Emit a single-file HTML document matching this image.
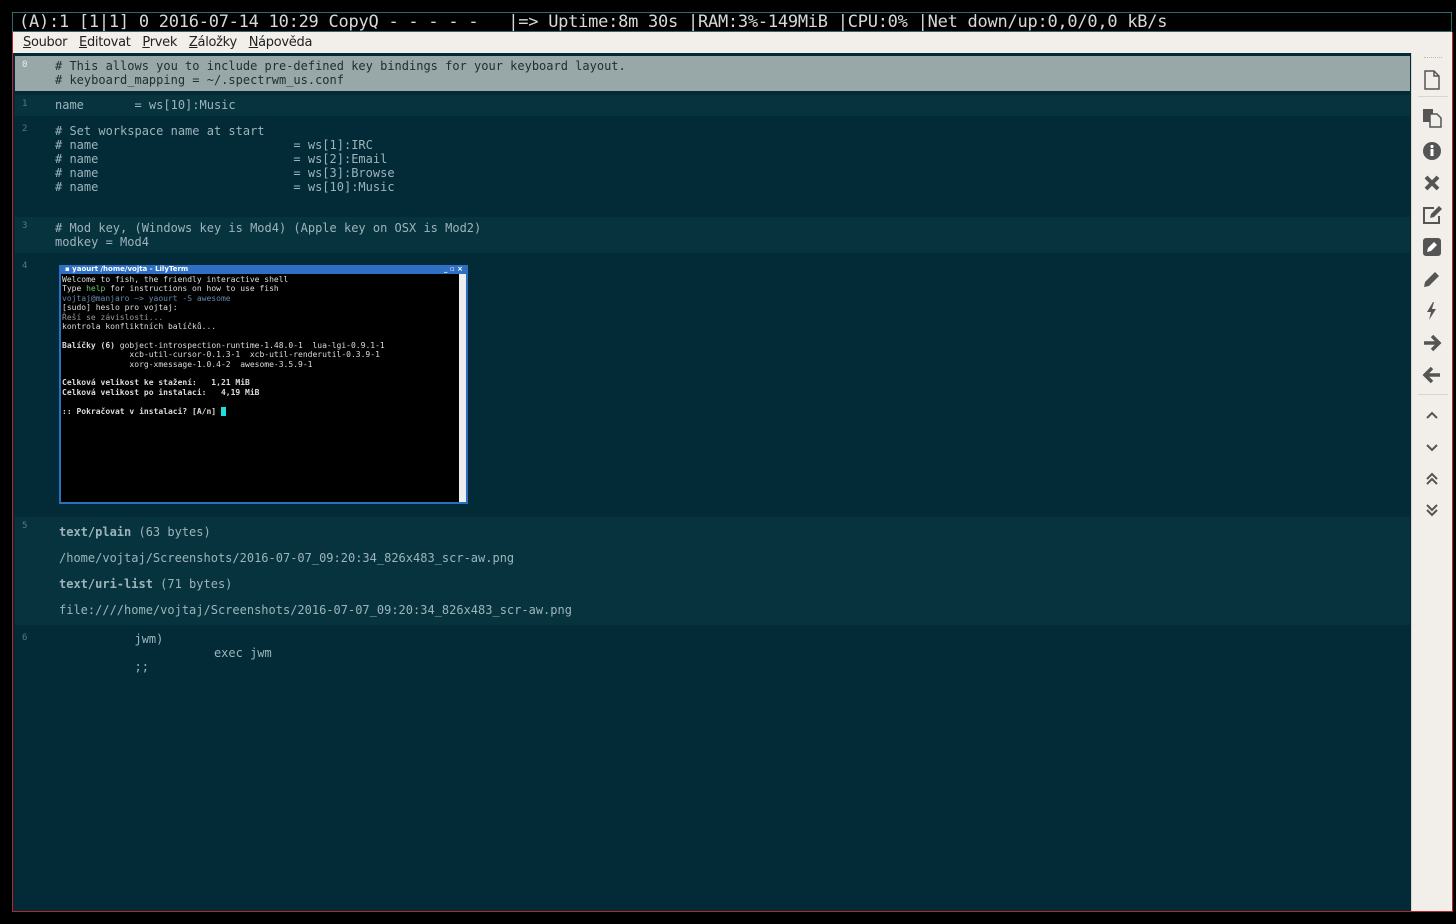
<!DOCTYPE html>
<html><head><meta charset="utf-8"><style>
*{margin:0;padding:0;box-sizing:border-box}
body{width:1456px;height:924px;background:#000;position:relative;overflow:hidden;font-family:"DejaVu Sans Mono","Liberation Mono",monospace}
#bar{position:absolute;left:12px;top:12px;width:1440px;height:20px;background:#000;border:1px solid #2e6a6a;color:#d8d8d8;font:17px/18px "DejaVu Sans Mono",monospace;padding-left:6px;white-space:pre;letter-spacing:-0.25px}
#win{position:absolute;left:12px;top:32px;width:1441px;height:880px;border:1px solid #b8252a;border-top:none;background:#022a37}
#menu{position:absolute;left:0;top:0;width:1439px;height:21px;background:#f2efea;font:13px/21px "DejaVu Sans","Liberation Sans",sans-serif;color:#222;padding-left:10px;letter-spacing:-0.3px}
#menu span{margin-right:8px}
#menu u{text-decoration:underline}
#list{position:absolute;left:2px;top:23px;width:1395px;height:856px;background:#022a37}
.row{position:absolute;left:0;width:1395px;color:#9db4bb;font-size:12px;line-height:14px;white-space:pre}
.alt{background:#07333f}
.num{position:absolute;left:7px;top:2px;font-size:9px;color:#5a7880}
.txt{position:absolute;left:40px}
#tb{position:absolute;left:1398px;top:21px;width:41px;height:858px;background:#f2efea;border-left:1px solid #d8d4ce}
.ic{position:absolute;left:10px;width:20px;height:20px}
.sep{position:absolute;left:6px;width:30px;height:1px;background:#d8d4ce}
</style></head><body>
<div id="bar">(A):1 [1|1] 0 2016-07-14 10:29 CopyQ - - - - -   |=> Uptime:8m 30s |RAM:3%-149MiB |CPU:0% |Net down/up:0,0/0,0 kB/s</div>
<div id="win">
<div id="menu"><span><u>S</u>oubor</span> <span><u>E</u>ditovat</span> <span><u>P</u>rvek</span> <span><u>Z</u>áložky</span> <span><u>N</u>ápověda</span></div>
<div id="list">
<div class="row" style="top:1px;height:35px;background:#98a8a8;color:#1e2e30"><span class="num" style="color:#e8eeee">0</span><div class="txt" style="top:3px"># This allows you to include pre-defined key bindings for your keyboard layout.
# keyboard_mapping = ~/.spectrwm_us.conf</div></div>
<div class="row alt" style="top:40px;height:21px"><span class="num">1</span><div class="txt" style="top:3px">name       = ws[10]:Music</div></div>
<div class="row" style="top:65px;height:93px"><span class="num">2</span><div class="txt" style="top:4px"># Set workspace name at start
# name                           = ws[1]:IRC
# name                           = ws[2]:Email
# name                           = ws[3]:Browse
# name                           = ws[10]:Music</div></div>
<div class="row alt" style="top:162px;height:36px"><span class="num">3</span><div class="txt" style="top:4px"># Mod key, (Windows key is Mod4) (Apple key on OSX is Mod2)
modkey = Mod4</div></div>
<div class="row" style="top:202px;height:256px"><span class="num">4</span><div style="position:absolute;left:44px;top:8px;width:409px;height:239px;background:#000;border:2px solid #2a6fc0;border-top:none;white-space:normal"><div style="height:9px;background:#2f6fc4;color:#fff;font:bold 7px/9px 'DejaVu Sans',sans-serif;padding-left:4px;white-space:nowrap">▪ yaourt  /home/vojta - LilyTerm<span style="float:right;margin-right:3px">_ ▫ ×</span></div><div style="position:absolute;right:0;top:9px;width:7px;bottom:0;background:#eee"></div><div style="position:absolute;left:1px;top:10px;color:#ddd;font:8px/9.4px 'DejaVu Sans Mono',monospace;white-space:pre">Welcome to fish, the friendly interactive shell
Type <span style="color:#6c6">help</span> for instructions on how to use fish
<span style="color:#68a">vojtaj@manjaro ~&gt; yaourt -S awesome</span>
[sudo] heslo pro vojtaj:
<span style="color:#999">Řeší se závislosti...</span>
kontrola konfliktních balíčků...

<b>Balíčky (6)</b> gobject-introspection-runtime-1.48.0-1  lua-lgi-0.9.1-1
              xcb-util-cursor-0.1.3-1  xcb-util-renderutil-0.3.9-1
              xorg-xmessage-1.0.4-2  awesome-3.5.9-1

<b>Celková velikost ke stažení:   1,21 MiB
Celková velikost po instalaci:   4,19 MiB

:: Pokračovat v instalaci? [A/n]</b> <span style="background:#2dd;color:#2dd">_</span></div></div></div>
<div class="row alt" style="top:462px;height:108px"><span class="num">5</span><div class="txt" style="left:44px;top:2px;line-height:26px"><b>text/plain</b> (63 bytes)
/home/vojtaj/Screenshots/2016-07-07_09:20:34_826x483_scr-aw.png
<b>text/uri-list</b> (71 bytes)
file:////home/vojtaj/Screenshots/2016-07-07_09:20:34_826x483_scr-aw.png</div></div>
<div class="row" style="top:574px;height:60px"><span class="num">6</span><div class="txt" style="top:3px">           jwm)
                      exec jwm
           ;;</div></div>
</div>
<div id="tb">
<div style="position:absolute;left:12px;top:4px;width:18px;border-top:1px dotted #bbb"></div>
<svg class="ic" style="top:17px" viewBox="0 0 20 20"><path d="M3 1h9l5 5v13H3z M12 1v5h5" fill="none" stroke="#555" stroke-width="1.5"/></svg>
<div class="sep" style="top:43px"></div>
<svg class="ic" style="top:55px" viewBox="0 0 20 20"><path d="M1 1h10v13H1z" fill="#555"/><path d="M8 6h7l4 4v9H8z" fill="#f2efea" stroke="#555" stroke-width="1.5"/></svg>
<svg class="ic" style="top:88px" viewBox="0 0 20 20"><circle cx="10" cy="10" r="9" fill="#555"/><rect x="8.5" y="8" width="3" height="7" fill="#fff"/><circle cx="10" cy="5.5" r="1.6" fill="#fff"/></svg>
<svg class="ic" style="top:120px" viewBox="0 0 20 20"><path d="M4 4L16 16M16 4L4 16" stroke="#555" stroke-width="4"/></svg>
<svg class="ic" style="top:152px" viewBox="0 0 20 20"><path d="M12 3H2v15h15v-7" fill="none" stroke="#555" stroke-width="2"/><path d="M8 13l1-4 8-8 3 3-8 8z" fill="#555"/></svg>
<svg class="ic" style="top:184px" viewBox="0 0 20 20"><rect x="1" y="1" width="18" height="18" rx="3" fill="#555"/><path d="M5 15l1-4 6-6 3 3-6 6z" fill="#fff"/></svg>
<svg class="ic" style="top:216px" viewBox="0 0 20 20"><path d="M2 18l1-5 10-10 4 4-10 10z" fill="#555"/></svg>
<svg class="ic" style="top:248px" viewBox="0 0 20 20"><path d="M11 1L5 11h4l-2 8 7-11h-4l2-7z" fill="#555"/></svg>
<svg class="ic" style="top:280px" viewBox="0 0 20 20"><path d="M2 10h14M10 3l7 7-7 7" fill="none" stroke="#555" stroke-width="3.5"/></svg>
<svg class="ic" style="top:312px" viewBox="0 0 20 20"><path d="M18 10H4M10 3l-7 7 7 7" fill="none" stroke="#555" stroke-width="3.5"/></svg>
<div class="sep" style="top:341px"></div>
<svg class="ic" style="top:352px" viewBox="0 0 20 20"><path d="M5 13l5-5 5 5" fill="none" stroke="#555" stroke-width="2"/></svg>
<svg class="ic" style="top:384px" viewBox="0 0 20 20"><path d="M5 8l5 5 5-5" fill="none" stroke="#555" stroke-width="2"/></svg>
<svg class="ic" style="top:416px" viewBox="0 0 20 20"><path d="M5 10l5-5 5 5M5 15l5-5 5 5" fill="none" stroke="#555" stroke-width="2"/></svg>
<svg class="ic" style="top:447px" viewBox="0 0 20 20"><path d="M5 5l5 5 5-5M5 10l5 5 5-5" fill="none" stroke="#555" stroke-width="2"/></svg>
</div>
</div>
</body></html>
